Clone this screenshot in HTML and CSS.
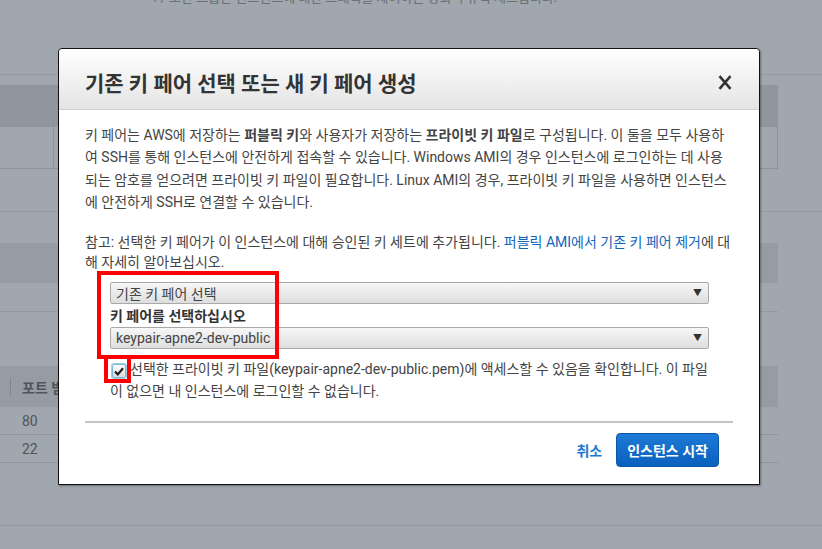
FILE: index.html
```html
<!DOCTYPE html>
<html lang="ko">
<head>
<meta charset="utf-8">
<title>기존 키 페어 선택 또는 새 키 페어 생성</title>
<link rel="stylesheet" href="styles.css">
</head>
<body>
<div class="page">
  <div class="bg-head"><p class="bg-cut">4 / 보안 그룹은 인스턴스에 대한 트래픽을 제어하는 방화벽 규칙 세트입니다.</p></div>
  <div class="bg-table one">
    <div class="bg-th"><span class="col-a"></span><span class="col-b"></span></div>
    <div class="bg-td"><span class="col-a"></span><span class="col-b"></span></div>
  </div>
  <div class="bg-line full gap-a"></div>
  <div class="bg-band"></div>
  <div class="bg-line part gap-b"></div>
  <div class="bg-table three">
    <div class="bg-th"><span class="sep"></span><span class="th-text">포트 범위</span></div>
    <div class="bg-row">80</div>
    <div class="bg-row">22</div>
  </div>
  <div class="bg-line full gap-c"></div>

  <div class="modal">
    <div class="modal-head">
      <h2 class="modal-title">기존 키 페어 선택 또는 새 키 페어 생성</h2>
      <button class="close" aria-label="닫기">
        <svg width="14" height="15" viewBox="0 0 14 15"><path d="M1.5 1.2 L12.5 13.8 M12.5 1.2 L1.5 13.8" stroke="#333" stroke-width="2.6" fill="none"/></svg>
      </button>
    </div>
    <div class="modal-body">
      <p class="intro">키 페어는 AWS에 저장하는 <b>퍼블릭 키</b>와 사용자가 저장하는 <b>프라이빗 키 파일</b>로 구성됩니다. 이 둘을 모두 사용하여 SSH를 통해 인스턴스에 안전하게 접속할 수 있습니다. Windows AMI의 경우 인스턴스에 로그인하는 데 사용되는 암호를 얻으려면 프라이빗 키 파일이 필요합니다. Linux AMI의 경우, 프라이빗 키 파일을 사용하면 인스턴스에 안전하게 SSH로 연결할 수 있습니다.</p>
      <p class="note">참고: 선택한 키 페어가 이 인스턴스에 대해 승인된 키 세트에 추가됩니다. <a href="#">퍼블릭 AMI에서 기존 키 페어 제거</a>에 대해 자세히 알아보십시오.</p>
      <div class="form">
        <div class="select"><span>기존 키 페어 선택</span><span class="arrow">▼</span></div>
        <div class="label">키 페어를 선택하십시오</div>
        <div class="select"><span>keypair-apne2-dev-public</span><span class="arrow">▼</span></div>
        <p class="ack"><span class="check"><svg width="10" height="9" viewBox="0 0 10 9"><path d="M1 4.6 L3.8 7.4 L9 1.2" stroke="#222" stroke-width="2.2" fill="none"/></svg></span>선택한 프라이빗 키 파일(keypair-apne2-dev-public.pem)에 액세스할 수 있음을 확인합니다. 이 파일이 없으면 내 인스턴스에 로그인할 수 없습니다.</p>
        <div class="mark mark-select"></div>
        <div class="mark mark-check"></div>
      </div>
    </div>
    <div class="modal-foot">
      <a class="cancel" href="#">취소</a>
      <button class="primary">인스턴스 시작</button>
    </div>
  </div>
</div>
</body>
</html>
```
FILE: styles.css
```css
* { box-sizing: border-box; }
html, body { margin: 0; padding: 0; }
body {
  font-family: Roboto, "Noto Sans CJK KR", sans-serif;
  background: #a0a7ae;
}
.page {
  position: relative;
  width: 822px;
  height: 549px;
  overflow: hidden;
  background: #a0a7ae;
}
.bg-head {
  height: 75px;
  border-bottom: 1px solid #949ba2;
  overflow: hidden;
}
.bg-cut {
  margin: -13px 0 0 150px;
  font-size: 13px;
  color: #6a7077;
  white-space: nowrap;
}
.bg-table { width: 778px; }
.bg-table.one { margin-top: 10px; }
.bg-table.one .bg-th {
  display: flex;
  height: 42px;
  background: #8f969d;
}
.bg-table.one .bg-td {
  display: flex;
  height: 42px;
  border-bottom: 1px solid #8c939a;
  border-right: 1px solid #8c939a;
}
.col-a { width: 54px; border-right: 1px solid #8c939a; }
.bg-line { height: 1px; background: #939aa1; }
.bg-line.full { width: 822px; }
.bg-line.part { width: 778px; }
.gap-a { margin-top: 42px; }
.bg-band { margin-top: 31px; width: 778px; height: 40px; background: #959ca3; }
.gap-b { margin-top: 28px; }
.bg-table.three { margin-top: 54px; }
.bg-table.three .bg-th {
  display: flex;
  align-items: center;
  height: 41px;
  background: #959ca3;
  font-size: 14px;
  font-weight: bold;
  color: #4f555b;
}
.sep { width: 1px; height: 18px; background: #80878e; margin-left: 10px; margin-right: 11px; }
.bg-row {
  height: 28px;
  border-bottom: 1px solid #8f969d;
  padding-left: 22px;
  font-size: 14px;
  line-height: 28px;
  color: #4f555b;
}
.gap-c { margin-top: 62px; }

/* modal */
.modal {
  position: absolute;
  left: 58px;
  top: 48px;
  width: 702px;
  height: 437px;
  background: #fff;
  border: 1px solid #111;
  border-radius: 4px 4px 0 0;
  box-shadow: 1px 1px 2px rgba(0,0,0,0.35);
}
.modal-head {
  display: flex;
  align-items: center;
  justify-content: space-between;
  height: 61px;
  padding: 6px 27px 0 26px;
  border-bottom: 1px solid #cfcfcf;
  border-radius: 4px 4px 0 0;
  background: linear-gradient(#ffffff, #e4e4e4);
}
.modal-title {
  margin: 0;
  font-size: 21px;
  letter-spacing: 0;
  font-weight: bold;
  color: #333;
}
.close {
  border: 0;
  background: none;
  padding: 0;
  display: flex;
}
.modal-body {
  padding: 14px 26px 0 26px;
  font-size: 14px;
  color: #444;
}
.intro { margin: 0; line-height: 22.4px; }
.note { margin: 18px 0 0; line-height: 20px; }
.note a { color: #1166bb; text-decoration: none; }
.form {
  position: relative;
  margin: 10px 24px 0 25px;
}
.select {
  display: flex;
  justify-content: space-between;
  align-items: center;
  height: 22px;
  padding: 0 6px 0 5px;
  border: 1px solid #a9a9a9;
  border-radius: 2px;
  background: linear-gradient(#f7f7f7, #dedede);
  color: #444;
  font-size: 14px;
}
.arrow { font-size: 9px; color: #333; }
.label {
  height: 23px;
  line-height: 24px;
  font-weight: bold;
  color: #333;
}
.ack {
  margin: 9px -4px 0 0;
  line-height: 22px;
  color: #444;
}
.check {
  display: inline-flex;
  align-items: center;
  justify-content: center;
  width: 14px;
  height: 14px;
  margin: 0 4px 0 2px;
  vertical-align: -2px;
  border: 1px solid #7fb6d8;
  border-radius: 2px;
  background: linear-gradient(#fdfdfd, #dcdcdc);
  box-shadow: 0 0 0 1px #9fd3ea;
}
.mark {
  position: absolute;
  border: 4px solid #ff0000;
}
.mark-select { left: -13px; top: -11px; width: 182px; height: 88px; }
.mark-check { left: -6px; top: 73px; width: 27px; height: 28px; border-top: 0; }
.modal-foot {
  display: flex;
  justify-content: flex-end;
  align-items: center;
  gap: 14px;
  margin: 19px 26px 0;
  padding: 10px 14px 0 0;
  border-top: 2px solid #c4c4c4;
}
.cancel {
  color: #1a7ad0;
  font-weight: bold;
  font-size: 14px;
  text-decoration: none;
}
.primary {
  height: 34px;
  padding: 0 10px;
  border: 1px solid #0a56a8;
  border-radius: 4px;
  background: linear-gradient(#1d7ad6, #0a60bd);
  color: #fff;
  font-family: inherit;
  font-weight: bold;
  font-size: 14px;
}
```
